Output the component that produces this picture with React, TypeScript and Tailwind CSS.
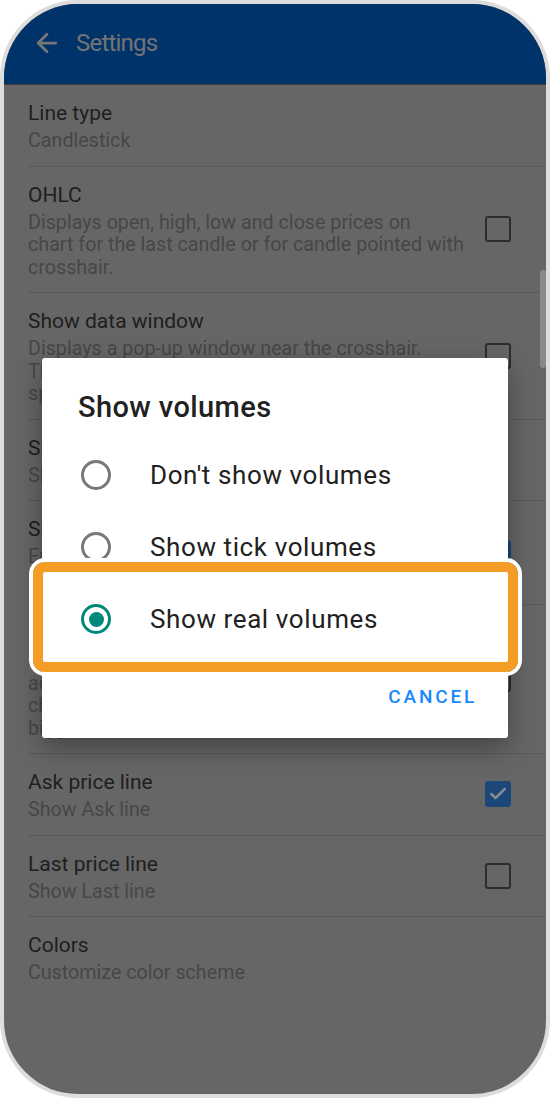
import { ArrowLeft, Check } from 'lucide-react'

type Row = {
  title: string
  lines: string[]
  check?: 'on' | 'off'
}

const rows: Row[] = [
  { title: 'Line type', lines: ['Candlestick'] },
  {
    title: 'OHLC',
    lines: [
      'Displays open, high, low and close prices on',
      'chart for the last candle or for candle pointed with',
      'crosshair.',
    ],
    check: 'off',
  },
  {
    title: 'Show data window',
    lines: [
      'Displays a pop-up window near the crosshair.',
      'The window shows prices of the candle at the',
      'specified point.',
    ],
    check: 'off',
  },
  { title: 'Show volumes', lines: ['Show real volumes'] },
  {
    title: 'Show trade levels',
    lines: ['Enable display of trade levels of open', 'positions and pending orders'],
    check: 'on',
  },
  {
    title: 'Show period separators',
    lines: [
      'Show vertical lines separating periods',
      'according to the current timeframe of the',
      'chart: days for intraday charts, months for',
      'bigger timeframes.',
    ],
    check: 'off',
  },
  { title: 'Ask price line', lines: ['Show Ask line'], check: 'on' },
  { title: 'Last price line', lines: ['Show Last line'], check: 'off' },
  { title: 'Colors', lines: ['Customize color scheme'] },
]

const options = ["Don't show volumes", 'Show tick volumes', 'Show real volumes']

const CheckBox = ({ on }: { on: boolean }) =>
  on ? (
    <div className="flex h-[26px] w-[26px] items-center justify-center rounded-[3px] bg-[#1c4779]">
      <Check size={20} strokeWidth={3} className="text-[#8a8a8a]" />
    </div>
  ) : (
    <div className="h-[26px] w-[26px] rounded-[3px] border-[2.5px] border-[#2c2c2c]" />
  )

const SettingRow = ({ row, last }: { row: Row; last: boolean }) => (
  <div
    className={`flex items-center pr-[35px] ${last ? '' : 'border-b border-[#5a5a5a]'}`}
  >
    <div className="flex-1 pt-[14px] pb-[13px]">
      <div className="text-[21px] leading-[28px] text-[#1e1e1e]">{row.title}</div>
      <div className="mt-[3px] text-[19.7px] leading-[22.5px] text-[#474747]">
        {row.lines.map((l) => (
          <div key={l} className="whitespace-nowrap">
            {l}
          </div>
        ))}
      </div>
    </div>
    {row.check && <CheckBox on={row.check === 'on'} />}
  </div>
)

const Radio = ({ on }: { on: boolean }) =>
  on ? (
    <div className="flex h-[30px] w-[30px] items-center justify-center rounded-full border-[3px] border-[#00897b]">
      <div className="h-[15px] w-[15px] rounded-full bg-[#00897b]" />
    </div>
  ) : (
    <div className="h-[30px] w-[30px] rounded-full border-[3px] border-[#777777]" />
  )

export default function App() {
  return (
    <div
      className="h-[1098px] w-[550px] bg-white"
      style={{ fontFamily: 'Roboto, "Noto Sans", sans-serif' }}
    >
      <div className="relative flex h-full flex-col overflow-hidden rounded-[78px] border-4 border-[#dddddd] bg-[#666666]">
        <header className="flex h-[81px] shrink-0 items-center gap-[14px] border-b border-[#3f3f3f] bg-[#00336a] pb-[2px] pl-[28px]">
          <ArrowLeft size={30} strokeWidth={2.2} className="text-[#777777]" />
          <span className="text-[24px] tracking-[-0.8px] text-[#747474]">Settings</span>
        </header>

        <div className="flex flex-col pl-[24px]">
          {rows.map((r, i) => (
            <SettingRow key={r.title} row={r} last={i === rows.length - 1} />
          ))}
        </div>

        {/* scrollbar */}
        <div className="absolute top-[266px] right-0 h-[98px] w-[6px] rounded-full bg-[#8a8a8a]" />

        {/* dialog */}
        <div className="absolute top-[354px] left-[38px] flex h-[380px] w-[466px] flex-col rounded-[3px] bg-white shadow-[0_10px_28px_rgba(0,0,0,0.35)]">
          <div className="pt-[31px] pl-[36px] text-[29px] leading-[36px] font-medium tracking-[0.4px] text-[#212121]">
            Show volumes
          </div>
          <div className="mt-[14px] flex flex-col">
            {options.map((o, i) => (
              <div key={o} className="flex h-[72px] items-center gap-[39px] pl-[39px]">
                <Radio on={i === 2} />
                <span className="text-[26px] tracking-[0.6px] text-[#212121]">{o}</span>
              </div>
            ))}
          </div>
          <div className="mt-[30px] flex justify-end pr-[31px]">
            <span className="text-[19px] leading-[24px] font-medium tracking-[2.8px] text-[#1a88ff]">
              CANCEL
            </span>
          </div>
        </div>

        {/* highlight */}
        <div className="absolute top-[558px] left-[29px] h-[110px] w-[485px] rounded-[12px] border-[10px] border-[#f39c26] ring-4 ring-white" />
      </div>
    </div>
  )
}
